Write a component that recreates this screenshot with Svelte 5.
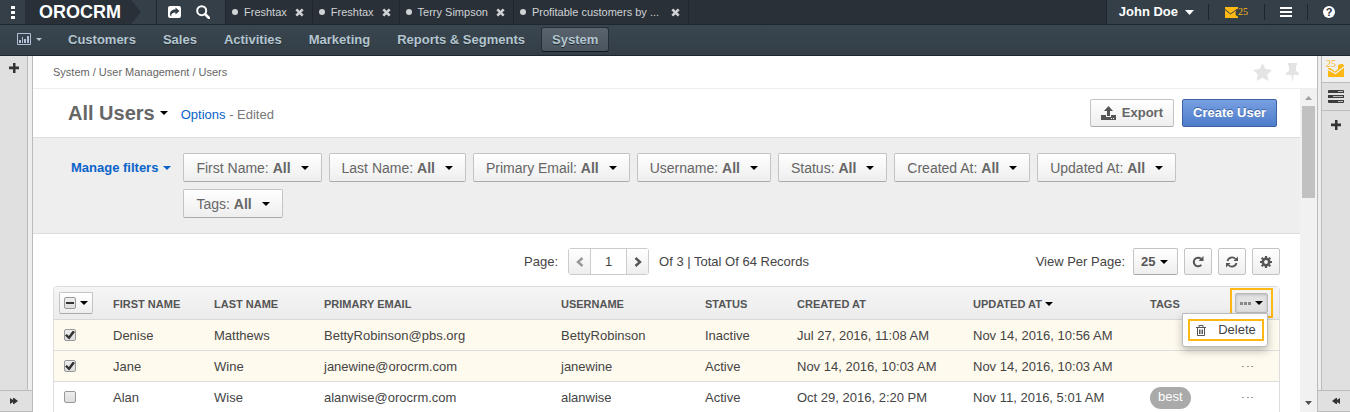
<script>
  const tabs = ['Freshtax', 'Freshtax', 'Terry Simpson', 'Profitable customers by ...'];
  const menu = ['Customers', 'Sales', 'Activities', 'Marketing', 'Reports & Segments', 'System'];
  const filters = ['First Name', 'Last Name', 'Primary Email', 'Username', 'Status', 'Created At', 'Updated At', 'Tags'];
  const columns = ['First name', 'Last name', 'Primary email', 'Username', 'Status', 'Created at', 'Updated at', 'Tags'];

  let rows = $state([
    { checked: true, cells: ['Denise', 'Matthews', 'BettyRobinson@pbs.org', 'BettyRobinson', 'Inactive', 'Jul 27, 2016, 11:08 AM', 'Nov 14, 2016, 10:56 AM'], tag: '' },
    { checked: true, cells: ['Jane', 'Wine', 'janewine@orocrm.com', 'janewine', 'Active', 'Nov 14, 2016, 10:03 AM', 'Nov 14, 2016, 10:03 AM'], tag: '' },
    { checked: false, cells: ['Alan', 'Wise', 'alanwise@orocrm.com', 'alanwise', 'Active', 'Oct 29, 2016, 2:20 PM', 'Nov 11, 2016, 5:01 AM'], tag: 'best' }
  ]);
  let page = $state('1');
  let menuOpen = $state(true);
  let some = $state(true);
</script>

{#snippet caret()}
  <svg class="caret" width="8" height="4" viewBox="0 0 8 4" aria-hidden="true"><path d="M0 0h8L4 4z" fill="currentColor" /></svg>
{/snippet}

{#snippet plus()}
  <svg width="10" height="10" viewBox="0 0 10 10" aria-hidden="true"><path d="M4 0h2.500v3.500H10v2.700H6.500V10H4V6.200H0V3.500h4z" fill="currentColor" /></svg>
{/snippet}

<div class="shell">
  <header class="topbar">
    <button class="dots" aria-label="Applications">
      <svg width="4" height="13" viewBox="0 0 4 13"><path d="M0 0h4v3H0zM0 5h4v3H0zM0 10h4v3H0z" fill="#fff" /></svg>
    </button>
    <a class="logo" href="#home">OROCRM</a>
    <svg class="tip" width="10" height="24" viewBox="0 0 10 24" aria-hidden="true"><path d="M0 0l10 12L0 24z" fill="#2a3038" /></svg>
    <div class="quick">
      <button aria-label="Share">
        <svg width="13" height="12" viewBox="0 0 13 12"><path fill="#fff" fill-rule="evenodd" d="M2 0h9q2 0 2 2v8q0 2-2 2H2q-2 0-2-2V2q0-2 2-2zM7.500 1.500v2C4 3.500 2 5.500 2 8q0 1.500 1.200 2.500C3 7.500 4.500 6.500 7.500 6.500v2L11.500 5z" /></svg>
      </button>
      <button aria-label="Search">
        <svg width="14" height="14" viewBox="0 0 14 14"><circle cx="5.700" cy="5.700" r="4.500" fill="none" stroke="#fff" stroke-width="2" /><path d="M9 9l4 4" stroke="#fff" stroke-width="2.500" stroke-linecap="round" /></svg>
      </button>
    </div>
    <nav class="tabs" aria-label="Pinned pages">
      {#each tabs as tab, i}
        <div class="tab" class:long={i === 3}>
          <i></i><a href="#tab">{tab}</a>
          <button aria-label="Close tab">
            <svg width="9" height="9" viewBox="0 0 9 9"><path d="M1.300 1.300l6.400 6.400M7.700 1.300L1.300 7.700" stroke="#cfd3d6" stroke-width="2.600" /></svg>
          </button>
        </div>
      {/each}
    </nav>
    <div class="account">
      <button class="user">John Doe <svg width="9" height="5" viewBox="0 0 9 5"><path d="M0 0h9L4.500 5z" fill="#fff" /></svg></button>
      <button class="mail" aria-label="25 emails">
        <svg width="13" height="11" viewBox="0 0 13 11"><path d="M0 0h13v2q-2 2-1 4l1 3v2H0z" fill="#fdb813" /><path d="M0 2.500l5.500 4.500L12.500 2" fill="none" stroke="#343f48" /><path d="M13 2q-2.500 1-2.500 4T13 9.500z" fill="#343f48" /></svg><span>25</span>
      </button>
      <button class="lines" aria-label="Shortcuts">
        <svg width="12" height="10" viewBox="0 0 12 10"><path d="M0 0h12v2H0zM0 4h12v2H0zM0 8h12v2H0z" fill="#fff" /></svg>
      </button>
      <button class="help" aria-label="Help">?</button>
    </div>
  </header>

  <nav class="mainnav" aria-label="Main">
    <button class="dash" aria-label="Dashboards">
      <svg width="14" height="12" viewBox="0 0 14 12"><path d="M.5.500h13v11H.5z" fill="none" stroke="#b4bfd8" /><path d="M2 7h2v3H2zM5 4h1v6H5zM7 6h2v4H7zM10 3h2v7h-2z" fill="#b4bfd8" /></svg>
      <svg width="6" height="3" viewBox="0 0 6 3"><path d="M0 0h6L3 3z" fill="#b4c6d0" /></svg>
    </button>
    {#each menu as item}
      <a href="#menu" class:active={item === 'System'}>{item}</a>
    {/each}
  </nav>

  <div class="body">
    <aside class="side left">
      <button class="slot first" aria-label="Add widget to left panel">{@render plus()}</button>
      <button class="toggle" aria-label="Expand left panel">
        <svg width="8" height="6" viewBox="0 0 8 6"><path d="M0 0l3 2V0h1l4 3-4 3H3V4L0 6z" fill="#333" /></svg>
      </button>
    </aside>

    <main>
      <div class="crumbs">
        <span>System / User Management / Users</span>
        <div class="marks">
          <button aria-label="Add to favorites">
            <svg width="19" height="18" viewBox="0 0 19 18"><path d="M9.500 0l2.900 6 6.600.900-4.800 4.500 1.200 6.600-5.900-3.200L3.600 18l1.200-6.600L0 6.900 6.600 6z" fill="#e4e4e4" /></svg>
          </button>
          <button aria-label="Pin page">
            <svg width="13" height="18" viewBox="0 0 13 18"><path d="M2 0h9v2.500h-1V8q3 1 3 4H7.500L6.800 18h-.6L5.500 12H0q0-3 3-4V2.500H2z" fill="#e4e4e4" /></svg>
          </button>
        </div>
      </div>

      <div class="scroller">
        <div class="content">
          <div class="title">
            <h1>All Users</h1>
            <button class="plain" aria-label="Saved views">{@render caret()}</button>
            <p><a href="#options">Options</a> - Edited</p>
            <div class="actions">
              <button class="btn export">
                <svg width="15" height="14" viewBox="0 0 15 14"><path fill="#555" fill-rule="evenodd" d="M7.500 0L12 5H9v5H6V5H3zM0 9h5v2h5V9h5v5H0zM10 12v1h1v-1zM12 12v1h1v-1z" /></svg>Export
              </button>
              <button class="btn primary">Create User</button>
            </div>
          </div>

          <div class="filters">
            <button class="manage">Manage filters {@render caret()}</button>
            <div class="chips">
              {#each filters as f}
                <button class="btn chip"><span>{f}: <b>All</b></span>{@render caret()}</button>
              {/each}
            </div>
          </div>

          <div class="tools">
            <div class="pager">
              <label for="page">Page:</label>
              <div class="group">
                <button aria-label="Previous page" disabled>
                  <svg width="8" height="10" viewBox="0 0 8 10"><path d="M6.500 1L2 5l4.500 4" fill="none" stroke="#999" stroke-width="2.400" /></svg>
                </button>
                <input id="page" bind:value={page} />
                <button aria-label="Next page">
                  <svg width="8" height="10" viewBox="0 0 8 10"><path d="M1.500 1L6 5 1.500 9" fill="none" stroke="#555" stroke-width="2.400" /></svg>
                </button>
              </div>
              <span>Of 3 | Total Of 64 Records</span>
            </div>
            <div class="view">
              <label for="size">View Per Page:</label>
              <div class="btn size">
                <select id="size"><option>25</option><option>50</option><option>100</option></select>{@render caret()}
              </div>
              <button class="btn sq" aria-label="Refresh">
                <svg width="12" height="12" viewBox="0 0 12 12"><path d="M9.300 8.800A4.300 4.300 0 1 1 9 2.800" fill="none" stroke="#555" stroke-width="2" /><path d="M11.500 0v5h-5z" fill="#555" /></svg>
              </button>
              <button class="btn sq" aria-label="Reset">
                <svg width="12" height="12" viewBox="0 0 12 12"><path d="M1.500 5A4.600 4.600 0 0 1 9.500 3M10.500 7A4.600 4.600 0 0 1 2.500 9" fill="none" stroke="#555" stroke-width="1.800" /><path d="M12 .500V5H7.500zM0 11.500V7h4.500z" fill="#555" /></svg>
              </button>
              <button class="btn sq" aria-label="Grid settings">
                <svg width="12" height="12" viewBox="0 0 12 12"><circle cx="6" cy="6" r="3.200" fill="none" stroke="#555" stroke-width="2.600" /><path d="M6 0v2M6 10v2M0 6h2M10 6h2M1.700 1.700l1.400 1.400M8.900 8.900l1.400 1.400M1.700 10.300l1.400-1.400M8.900 3.100l1.400-1.400" stroke="#555" stroke-width="2.200" /></svg>
              </button>
            </div>
          </div>

          <table>
            <colgroup>
              <col class="c0" /><col class="c1" /><col class="c2" /><col class="c3" /><col class="c4" /><col class="c5" /><col class="c6" /><col class="c7" /><col class="c8" /><col class="c9" />
            </colgroup>
            <thead>
              <tr>
                <th class="pick">
                  <div class="btn all">
                    <input type="checkbox" aria-label="Select all rows" bind:indeterminate={some} />
                    <button class="plain" aria-label="Selection options">{@render caret()}</button>
                  </div>
                </th>
                {#each columns as c}
                  <th>{c}{#if c === 'Updated at'}<span class="sort">{@render caret()}</span>{/if}</th>
                {/each}
                <th class="mass">
                  <div class="anchor">
                    <div class="ring">
                      <button class="btn more" aria-label="Mass actions" onclick={() => (menuOpen = !menuOpen)}>
                        <svg width="11" height="3" viewBox="0 0 11 3"><path d="M0 0h3v3H0zM4 0h3v3H4zM8 0h3v3H8z" fill="#888" /></svg>
                        {@render caret()}
                      </button>
                    </div>
                    {#if menuOpen}
                      <div class="popup">
                        <button>
                          <svg width="10" height="11" viewBox="0 0 10 11"><path d="M0 2.500h10M3 2V.5h4V2M1.500 3v7.500h7V3M3.500 4.500V9M5 4.500V9M6.500 4.500V9" fill="none" stroke="#555" /></svg>
                          Delete
                        </button>
                      </div>
                    {/if}
                  </div>
                </th>
              </tr>
            </thead>
            <tbody>
              {#each rows as row}
                <tr class:selected={row.checked}>
                  <td class="pick"><input type="checkbox" aria-label={`Select ${row.cells[0]} ${row.cells[1]}`} bind:checked={row.checked} /></td>
                  {#each row.cells as cell}<td>{cell}</td>{/each}
                  <td>{#if row.tag}<span class="tag">{row.tag}</span>{/if}</td>
                  <td class="mass"><button class="rowmenu" aria-label="Row actions">
                    <svg width="11" height="1" viewBox="0 0 11 1"><path d="M0 0h2v1H0zM5 0h2v1H5zM9 0h2v1H9z" fill="#999" /></svg>
                  </button></td>
                </tr>
              {/each}
            </tbody>
          </table>
        </div>
        <div class="bar" aria-hidden="true">
          <svg width="7" height="4" viewBox="0 0 7 4"><path d="M0 4h7L3.500 0z" fill="#a0a0a0" /></svg>
          <div class="track"><div class="thumb"></div></div>
          <svg width="7" height="4" viewBox="0 0 7 4"><path d="M0 0h7L3.500 4z" fill="#505050" /></svg>
        </div>
      </div>
    </main>

    <aside class="side right">
      <button class="slot inbox" aria-label="Recent emails">
        <svg width="16" height="13" viewBox="0 0 16 13"><path d="M10 1l3-1h2l1 2v11H0V4h2l5 3.500L10 5z" fill="#fdb813" /><path d="M0 5.500l7.500 4L16 3" fill="none" stroke="#f0f0f0" stroke-width="1.300" /></svg><span>25</span>
      </button>
      <button class="slot" aria-label="Task list">
        <svg width="16" height="13" viewBox="0 0 16 13"><path d="M1 0h14q1 0 1 1v2H0V1q0-1 1-1zM0 5h16v3H0zM0 10h16v2q0 1-1 1H1q-1 0-1-1z" fill="#3c3c3c" /><path d="M10 1.500h5M5 6.500h10M10 11.500h5" stroke="#bbb" /></svg>
      </button>
      <button class="slot last" aria-label="Add widget to right panel">{@render plus()}</button>
      <button class="toggle" aria-label="Expand right panel">
        <svg width="8" height="6" viewBox="0 0 8 6"><path d="M8 0L5 2V0H4L0 3l4 3h1V4l3 2z" fill="#333" /></svg>
      </button>
    </aside>
  </div>
</div>

<style>
  :global(body) { margin: 0; }
  * { box-sizing: border-box; }
  .shell { display: flex; flex-direction: column; height: 100vh; overflow: hidden; font: 13px/20px "Liberation Sans", Arial, sans-serif; color: #444; background: #fff; }
  svg { display: block; flex: none; }
  button { font: inherit; color: inherit; border: 0; padding: 0; margin: 0; background: none; display: flex; align-items: center; justify-content: center; cursor: pointer; }
  a { text-decoration: none; color: inherit; }

  .topbar { display: flex; flex: none; height: 25px; background: #343f48; border-bottom: 1px solid #20262d; }
  .dots { width: 25px; background: #343f48; }
  .logo { display: flex; align-items: center; width: 106px; padding-left: 14px; background: #2a3038; color: #fff; font-size: 18px; font-weight: bold; }
  .quick { display: flex; gap: 15px; margin-left: 15px; padding: 0 15px 0 11px; border-left: 1px solid #20262d; }
  .tabs { display: flex; flex: 1; min-width: 0; background: #2a3038; border-left: 1px solid #20262d; overflow: hidden; }
  .tab { display: flex; align-items: center; padding: 0 8px 0 6px; border-right: 1px solid #20262d; font-size: 11px; color: #cfd3d6; white-space: nowrap; }
  .tab i { width: 6px; height: 6px; border-radius: 3px; background: #cfd3d6; margin-right: 6px; }
  .tab button { margin-left: 8px; }
  .tab.long button { margin-left: 12px; }
  .account { display: flex; align-items: center; border-left: 1px solid #20262d; color: #fff; }
  .account button { height: 16px; border-right: 1px solid #20262d; }
  .user { gap: 7px; padding: 0 14px 0 12px; font-weight: bold; }
  .mail { width: 56px; font: 10px/12px "Liberation Serif", serif; color: #fdb813; }
  .lines { width: 43px; }
  .account .help { width: 12px; height: 12px; margin: 0 15px; border: 0; border-radius: 6px; background: #fff; color: #2a3038; font-size: 11px; font-weight: bold; line-height: 12px; }

  .mainnav { display: flex; flex: none; align-items: center; height: 31px; padding: 0 0 2px 17px; border-bottom: 1px solid #20262d; background: linear-gradient(#3a464f, #333e47); font-weight: bold; color: #b4c6d0; text-shadow: 0 1px 0 #222a31; }
  .dash { gap: 5px; margin-right: 15px; }
  .mainnav a { margin-right: 5px; padding: 1px 10px; border: 1px solid transparent; border-radius: 3px; height: 25px; line-height: 21px; white-space: nowrap; }
  .mainnav a.active { background: linear-gradient(#59636d, #4a545e); border-color: #262d34; border-bottom-color: #12161a; }

  .body { display: flex; flex: 1; min-height: 0; }
  .side { display: flex; flex-direction: column; flex: none; width: 33px; background: #e0e0e0; }
  .left { border-right: 1px solid #bbb; box-shadow: inset -4px 0 #eee, inset -5px 0 #bbb; }
  .right { border-left: 1px solid #bbb; box-shadow: inset 3px 0 #eee, inset 4px 0 #bbb; padding-left: 4px; }
  .slot { height: 28px; flex: none; border-bottom: 1px solid #bbb; color: #333; }
  .slot.first { width: 28px; height: 24px; border: 0; }
  .slot.last { border: 0; }
  .inbox { position: relative; height: 27px; background: #f0f0f0; padding-top: 2px; }
  .inbox span { position: absolute; left: 4px; top: 3px; font: 10px/10px "Liberation Serif", serif; color: #fdb813; }
  .toggle { height: 22px; margin-top: auto; border-top: 1px solid #bbb; background: #e0e0e0; padding-right: 4px; border-bottom: 1px solid #bbb; }
  .right .toggle { margin-left: -4px; padding: 0 0 0 4px; }

  main { display: flex; flex-direction: column; flex: 1; min-width: 0; }
  .crumbs { display: flex; flex: none; justify-content: space-between; align-items: center; height: 33px; padding: 0 18px 0 20px; border-bottom: 1px solid #eee; font-size: 11px; color: #666; }
  .marks { display: flex; gap: 14px; }
  .scroller { display: flex; flex: 1; min-height: 0; }
  .content { flex: 1; min-width: 0; overflow: hidden; }
  .title { display: flex; align-items: center; height: 49px; padding: 0 23px 0 35px; border-bottom: 1px solid #ddd; }
  h1 { margin: 0 5px 0 0; font-size: 20px; line-height: 24px; color: #666; }
  .plain { color: #000; height: 20px; }
  .title p { margin: 4px 0 0 13px; color: #777; }
  .title p a { color: #0a63c9; }
  .actions { display: flex; gap: 8px; margin-left: auto; }
  .btn { display: flex; align-items: center; justify-content: center; border: 1px solid #c4c4c4; border-bottom-color: #aaa; border-radius: 2px; background: linear-gradient(#fff, #eee); color: #555; }
  .actions .btn { height: 28px; padding: 0 10px; font-weight: bold; color: #666; }
  .export { gap: 6px; }
  .actions .primary { color: #fff; background: linear-gradient(#78a0e2, #4d7cc9); border-color: #3d61a5; text-shadow: 0 -1px 0 #3d61a5; }

  .filters { display: flex; align-items: flex-start; gap: 12px; padding: 15px 20px 15px 38px; background: #eee; border-bottom: 1px solid #ddd; }
  .manage { gap: 5px; height: 29px; font-weight: bold; color: #0a63c9; white-space: nowrap; }
  .chips { display: flex; flex-wrap: wrap; gap: 7px; }
  .chip { height: 29px; padding: 0 12px; gap: 10px; font-size: 14px; color: #666; white-space: nowrap; }
  .chip .caret { color: #000; }

  .tools { display: grid; grid-template-columns: 1fr auto 1fr; align-items: center; height: 52px; padding: 3px 20px 0; white-space: nowrap; }
  .pager, .view { display: flex; align-items: center; grid-column: 2; }
  .view { grid-column: 3; justify-self: end; gap: 6px; }
  .view label { margin-right: 2px; }
  .group { display: flex; height: 27px; margin: 0 10px; border: 1px solid #ccc; border-radius: 3px; }
  .group button { width: 21px; background: linear-gradient(#fff, #eee); }
  .group input { width: 37px; border: solid #ccc; border-width: 0 1px; padding: 0; text-align: center; font: inherit; color: #444; background: #fff; border-radius: 0; }
  .size { position: relative; width: 45px; height: 27px; }
  select { appearance: none; width: 100%; height: 100%; padding: 0 0 0 7px; border: 0; background: none; font: inherit; font-weight: bold; color: #555; }
  .size .caret { position: absolute; right: 9px; color: #000; pointer-events: none; }
  .sq { width: 28px; height: 27px; border: 1px solid #c4c4c4; }

  table { width: calc(100% - 40px); margin: 0 20px; table-layout: fixed; border-collapse: separate; border-spacing: 0; border: 1px solid #ddd; border-radius: 4px 4px 0 0; }
  .c0 { width: 51px; } .c1 { width: 101px; } .c2 { width: 110px; } .c3 { width: 237px; } .c4 { width: 144px; }
  .c5 { width: 92px; } .c6 { width: 176px; } .c7 { width: 177px; } .c8 { width: 69px; } .c9 { width: 68px; }
  th { height: 33px; padding: 2px 8px 0; text-align: left; font-size: 11px; text-transform: uppercase; color: #555; background: linear-gradient(#f5f5f5, #ececec); border-bottom: 1px solid #d8d8d8; white-space: nowrap; }
  th:first-child { border-top-left-radius: 4px; }
  td { height: 31px; padding: 1px 8px 0; border-bottom: 1px solid #ddd; white-space: nowrap; }
  .selected td { background: #fffaee; }
  .sort { display: inline-block; margin-left: 3px; vertical-align: 2px; color: #000; }
  th.pick { padding: 0 0 0 5px; }
  td.pick { padding: 0 0 0 10px; }
  input[type="checkbox"] { appearance: none; display: grid; place-items: center; width: 12px; height: 12px; margin: 0; border: 1px solid #999; border-radius: 2px; background: linear-gradient(#eee, #ddd); }
  input[type="checkbox"]:checked::before { content: ""; width: 10px; height: 9px; background: #333; clip-path: polygon(0 55%, 18% 40%, 38% 60%, 78% 0, 100% 18%, 42% 100%); }
  input[type="checkbox"]:indeterminate::before { content: ""; width: 8px; height: 2px; background: #333; }
  .all { width: 34px; height: 22px; gap: 4px; }
  th.mass { padding: 0; overflow: visible; }
  .anchor { position: relative; width: 43px; margin: 0 6px 0 auto; }
  .ring { padding: 3px; border: 2px solid #fdb813; }
  .more { width: 33px; height: 20px; gap: 4px; background: #e2e2e2; border-color: #bbb; box-shadow: inset 0 1px 3px #bbb; }
  .more .caret { color: #000; }
  .popup { position: absolute; right: 5px; top: 25px; padding: 5px; width: 86px; background: #fff; border: 1px solid #bbb; border-radius: 0 0 3px 3px; box-shadow: 0 4px 8px rgba(0, 0, 0, 0.25); font-size: 13px; font-weight: normal; text-transform: none; color: #444; z-index: 1; }
  .popup button { width: 76px; height: 22px; gap: 12px; border: 2px solid #fdb813; }
  .rowmenu { width: 12px; height: 12px; margin-left: auto; margin-right: 18px; }
  .tag { display: inline-block; padding: 0 8px; height: 22px; line-height: 20px; border-radius: 11px; background: #aaa; color: #fff; vertical-align: middle; }

  .bar { display: flex; flex: none; flex-direction: column; align-items: center; width: 17px; padding: 7px 0; background: #f1f1f1; }
  .track { flex: 1; align-self: stretch; padding: 6px 2px; }
  .thumb { height: 32%; background: #c1c1c1; }
</style>
